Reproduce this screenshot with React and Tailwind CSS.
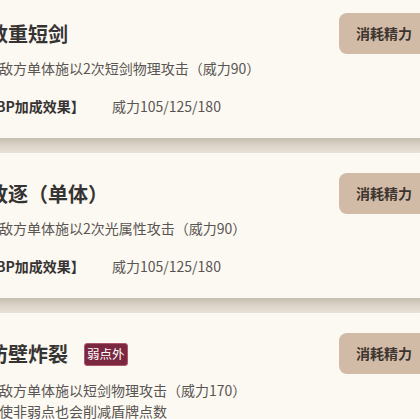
const skills = [
  {
    name: "数重短剑",
    desc: ["对敌方单体施以2次短剑物理攻击（威力90）"],
    bp: "威力105/125/180",
  },
  {
    name: "放逐（单体）",
    desc: ["对敌方单体施以2次光属性攻击（威力90）"],
    bp: "威力105/125/180",
  },
  {
    name: "防壁炸裂",
    badge: "弱点外",
    desc: ["对敌方单体施以短剑物理攻击（威力170）", "即使非弱点也会削减盾牌点数"],
  },
];

const SkillCard = ({ skill }) => (
  <div className="flex justify-between bg-[#fcf9f2] h-[145px] shrink-0">
    <div className="pt-[27px]">
      <div className="flex items-center h-[28px] ml-[1px]">
        <h3 className="text-[20px] leading-[28px] font-bold text-[#363433]">{skill.name}</h3>
        {skill.badge && (
          <span className="ml-[16px] h-[23px] px-[2px] flex items-center rounded-[3px] bg-[#7a2840] border border-[#b0586c] text-white text-[12.5px] leading-none">
            {skill.badge}
          </span>
        )}
      </div>
      <div className={`${skill.badge ? "mt-[12px]" : "mt-[10px]"} -ml-[2px] text-[14px] leading-[21px] text-[#585552]`}>
        {skill.desc.map((line) => (
          <p key={line}>{line}</p>
        ))}
      </div>
      {skill.bp && (
        <div className="mt-[17px] flex text-[14px] leading-[21px] -ml-[5px]">
          <span className="w-[130px] font-bold text-[#363433]">【BP加成效果】</span>
          <span className="text-[#585552]">{skill.bp}</span>
        </div>
      )}
    </div>
    <div className="mt-[20px] h-[41px] w-[90px] rounded-[8px] bg-[#d2bba6] flex items-center justify-center text-[14px] font-bold text-[#3d3530]">
      消耗精力
    </div>
  </div>
);

const Gap = () => (
  <div className="h-[15px] shrink-0 bg-gradient-to-b from-[#c6beb1] via-[#dcd4c8] to-[#e8e1d6]" />
);

export default function App() {
  return (
    <div
      className="w-[420px] h-[419px] overflow-hidden bg-[#fcf9f2]"
      style={{ fontFamily: '"Noto Sans CJK SC", "Noto Sans", sans-serif' }}
    >
      <div className="-mt-[7px] -ml-[13px] w-[442px] flex flex-col">
        <SkillCard skill={skills[0]} />
        <Gap />
        <SkillCard skill={skills[1]} />
        <Gap />
        <SkillCard skill={skills[2]} />
      </div>
    </div>
  );
}
